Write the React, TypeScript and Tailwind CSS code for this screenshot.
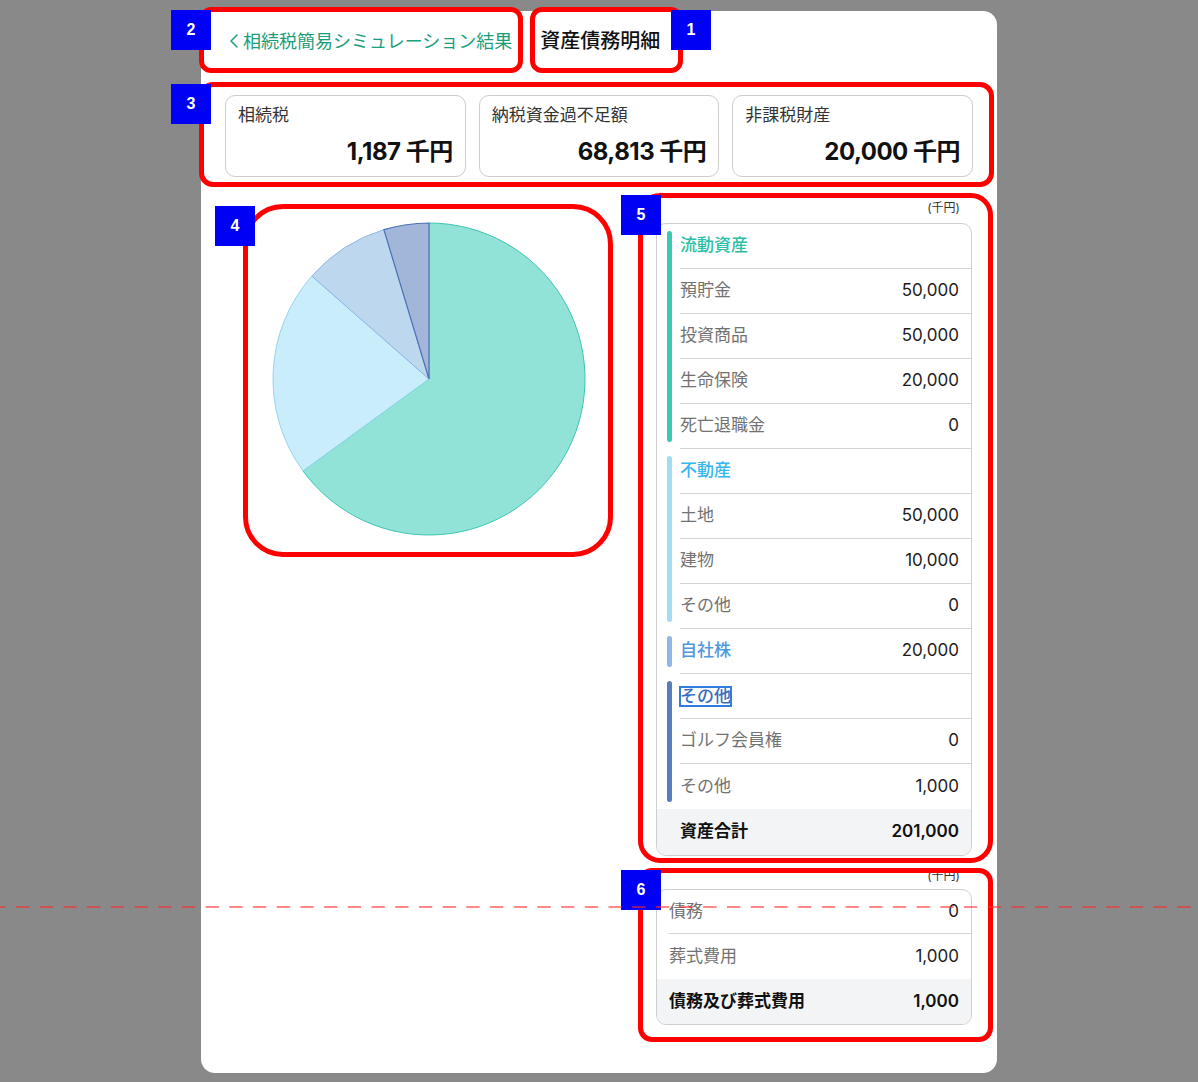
import { ChevronLeft } from 'lucide-react';

interface Item {
  label: string;
  value: string;
}

interface Group {
  name: string;
  value?: string;
  bar: string;
  text: string;
  outlined?: boolean;
  items: Item[];
}

const GROUPS: Group[] = [
  {
    name: '流動資産',
    bar: 'bg-[#3cc9b3]',
    text: 'text-[#2bbfa7]',
    items: [
      { label: '預貯金', value: '50,000' },
      { label: '投資商品', value: '50,000' },
      { label: '生命保険', value: '20,000' },
      { label: '死亡退職金', value: '0' },
    ],
  },
  {
    name: '不動産',
    bar: 'bg-[#a3dcf5]',
    text: 'text-[#36b6ec]',
    items: [
      { label: '土地', value: '50,000' },
      { label: '建物', value: '10,000' },
      { label: 'その他', value: '0' },
    ],
  },
  {
    name: '自社株',
    value: '20,000',
    bar: 'bg-[#8fb6e4]',
    text: 'text-[#4f98dc]',
    items: [],
  },
  {
    name: 'その他',
    bar: 'bg-[#5a7dbd]',
    text: 'text-[#3a6dbf]',
    outlined: true,
    items: [
      { label: 'ゴルフ会員権', value: '0' },
      { label: 'その他', value: '1,000' },
    ],
  },
];

const SUMMARY = [
  { label: '相続税', value: '1,187' },
  { label: '納税資金過不足額', value: '68,813' },
  { label: '非課税財産', value: '20,000' },
];

function PieChart() {
  return (
    <svg width={314} height={314} viewBox="0 0 314 314">
      <path d="M157 157 L157 1 A156 156 0 1 1 30.95 248.9 Z" fill="#91e3d7" stroke="#3cc6b0" strokeWidth={1} />
      <path d="M157 157 L30.95 248.9 A156 156 0 0 1 39.8 54.04 Z" fill="#c9edfa" stroke="#93d5f1" strokeWidth={1} />
      <path d="M157 157 L39.8 54.04 A156 156 0 0 1 111.9 7.66 Z" fill="#bdd7ef" stroke="#8fb6e4" strokeWidth={1} />
      <path d="M157 157 L111.9 7.66 A156 156 0 0 1 157 1 Z" fill="#a1b6d8" stroke="#4f72b5" strokeWidth={1.2} />
    </svg>
  );
}

function Label({ n, className }: { n: string; className: string }) {
  return (
    <div
      className={`absolute w-[40px] h-[40px] bg-[#0000f5] text-white text-[16px] font-semibold flex items-center justify-center ${className}`}
      style={{ fontFamily: '"Liberation Sans", Arial, sans-serif' }}
    >
      {n}
    </div>
  );
}

export default function App() {
  return (
    <div
      className="relative w-[1198px] min-h-[1082px] bg-[#898989] pt-[11px] overflow-hidden"
      style={{ fontFamily: 'Inter, "Noto Sans CJK JP", sans-serif' }}
    >
      {/* Card */}
      <div className="ml-[201px] w-[796px] bg-white rounded-[14px] px-6 pb-[48px]">
        {/* Header */}
        <div className="h-[60px] flex items-center">
          <div className="flex items-center text-[#1b9e7b] text-[18px]">
            <ChevronLeft className="w-[24px] h-[24px] -ml-[3px] -mr-[3px]" strokeWidth={1.5} />
            <span>相続税簡易シミュレーション結果</span>
          </div>
          <h1 className="ml-[28px] text-[20px] font-medium text-[#111]">資産債務明細</h1>
        </div>

        {/* Summary */}
        <div className="mt-6 grid grid-cols-3 gap-[13px]">
          {SUMMARY.map((s) => (
            <div key={s.label} className="h-[82px] border border-[#cdcdcd] rounded-[10px] px-3 pt-[7px]">
              <div className="text-[17px] text-[#333]">{s.label}</div>
              <div className="mt-[5px] text-right text-[24px] font-bold text-[#111] tracking-[-0.5px]">
                {s.value} 千円
              </div>
            </div>
          ))}
        </div>

        {/* Main */}
        <div className="mt-[23px] flex">
          <div className="w-[415px] pt-[22px] pl-[47px]">
            <PieChart />
          </div>

          <div className="ml-[16px] w-[316px]">
            <div className="h-[16px] text-right pr-3 text-[12px] leading-[16px] text-[#333]">(千円)</div>
            <div className="mt-[7px] border border-[#cfcfcf] rounded-[10px] overflow-hidden">
              {GROUPS.map((g) => (
                <div key={g.name} className="flex pl-[10px]">
                  <div className={`w-[5px] my-[7px] rounded-full ${g.bar}`} />
                  <div className="ml-[8px] flex-1">
                    <div className="h-[45px] border-b border-[#d4d4d4] flex items-center justify-between pr-3">
                      <span
                        className={`text-[17px] font-medium ${g.text} ${
                          g.outlined ? 'outline outline-2 outline-[#2f7de1] -outline-offset-1 leading-[19px]' : ''
                        }`}
                      >
                        {g.name}
                      </span>
                      {g.value && <span className="text-[17px] text-[#1c1c1c]">{g.value}</span>}
                    </div>
                    {g.items.map((it, i) => (
                      <div
                        key={it.label + i}
                        className={`h-[45px] flex items-center justify-between pr-3 ${
                          g.name === 'その他' && i === g.items.length - 1 ? '' : 'border-b border-[#d4d4d4]'
                        }`}
                      >
                        <span className="text-[17px] text-[#727272]">{it.label}</span>
                        <span className="text-[17px] text-[#1c1c1c]">{it.value}</span>
                      </div>
                    ))}
                  </div>
                </div>
              ))}
              <div className="h-[46px] bg-[#f3f4f6] flex items-center justify-between pl-[23px] pr-3">
                <span className="text-[17px] font-semibold text-[#111]">資産合計</span>
                <span className="text-[17px] font-semibold text-[#111]">201,000</span>
              </div>
            </div>

            <div className="mt-[12px] h-[16px] text-right pr-3 text-[12px] leading-[16px] text-[#333]">(千円)</div>
            <div className="mt-[5px] border border-[#cfcfcf] rounded-[10px] overflow-hidden">
              <div className="ml-3 h-[44px] border-b border-[#d4d4d4] flex items-center justify-between pr-3">
                <span className="text-[17px] text-[#727272]">債務</span>
                <span className="text-[17px] text-[#1c1c1c]">0</span>
              </div>
              <div className="ml-3 h-[45px] flex items-center justify-between pr-3">
                <span className="text-[17px] text-[#727272]">葬式費用</span>
                <span className="text-[17px] text-[#1c1c1c]">1,000</span>
              </div>
              <div className="h-[45px] bg-[#f3f4f6] flex items-center justify-between px-3">
                <span className="text-[17px] font-semibold text-[#111]">債務及び葬式費用</span>
                <span className="text-[17px] font-semibold text-[#111]">1,000</span>
              </div>
            </div>
          </div>
        </div>
      </div>

      {/* Annotation overlay */}
      <div className="absolute left-[199px] top-[7px] w-[324px] h-[66px] border-[5px] border-[#ff0000] rounded-[12px]" />
      <div className="absolute left-[530px] top-[7px] w-[153px] h-[66px] border-[5px] border-[#ff0000] rounded-[12px]" />
      <div className="absolute left-[199px] top-[82px] w-[795px] h-[105px] border-[5px] border-[#ff0000] rounded-[14px]" />
      <div className="absolute left-[243px] top-[204px] w-[370px] h-[353px] border-[5px] border-[#ff0000] rounded-[40px]" />
      <div className="absolute left-[638px] top-[193px] w-[355px] h-[670px] border-[5px] border-[#ff0000] rounded-[22px]" />
      <div className="absolute left-[638px] top-[868px] w-[355px] h-[174px] border-[5px] border-[#ff0000] rounded-[14px]" />
      <Label n="2" className="left-[171px] top-[10px]" />
      <Label n="1" className="left-[671px] top-[10px]" />
      <Label n="3" className="left-[171px] top-[84px]" />
      <Label n="4" className="left-[215px] top-[206px]" />
      <Label n="5" className="left-[621px] top-[195px]" />
      <Label n="6" className="left-[621px] top-[870px]" />
      <svg className="absolute left-0 top-[905px]" width={1198} height={4}>
        <line x1={0} y1={2} x2={1198} y2={2} stroke="rgba(255,40,40,0.55)" strokeWidth={2} strokeDasharray="13.3 10.4" strokeDashoffset={7.7} />
      </svg>
    </div>
  );
}
